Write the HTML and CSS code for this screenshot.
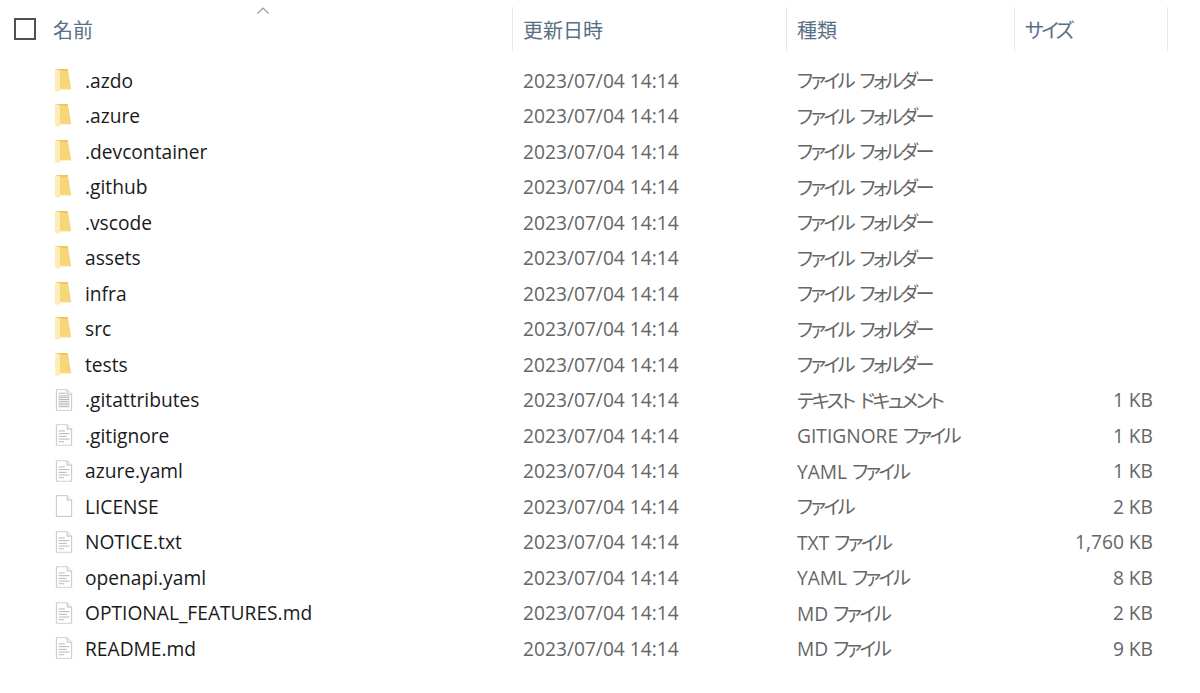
FILE: index.html
```html
<!DOCTYPE html>
<html lang="ja">
<head>
    <meta charset="UTF-8">
    <title>ファイル一覧</title>
    <link rel="stylesheet" href="styles.css">
</head>
<body>
    <svg class="defs" width="0" height="0">
        <defs>
            <linearGradient id="folderFill" x1="0" y1="0" x2="1" y2="0">
                <stop offset="0" stop-color="#fde9a9"/>
                <stop offset="1" stop-color="#f8dc8a"/>
            </linearGradient>
            <symbol id="folder" viewBox="0 0 16 23">
                <path d="M0 0h13v2l3 18H6V2z" fill="#f2c65c"/>
                <path d="M0 .5 5 2v16.500h9.500L16 20.500H5.500L3 23 .3 21.500z" fill="url(#folderFill)"/>
                <path d="M5 2h8l2.300 17.500H5z" fill="#f6d677"/>
                <path d="M0 .5v21l3 1.500 .5-3L5 19V2z" fill="#fdeeb9"/>
            </symbol>
            <symbol id="doc-blank" viewBox="0 0 20 24">
                <path d="M1.500 .5h12l5 5v18h-17z" fill="#fff" stroke="#bdbdbd"/>
                <path d="M13.500 .5v5h5" fill="#f2f2f2" stroke="#bdbdbd"/>
            </symbol>
            <symbol id="doc-text" viewBox="0 0 20 24">
                <use href="#doc-blank"/>
                <path d="M4 7.500h7M4 10.500h12M4 13.500h9M4 16.500h12M4 19.500h6" stroke="#b0b0b0" fill="none"/>
            </symbol>
            <symbol id="doc-lines" viewBox="0 0 20 24">
                <use href="#doc-blank"/>
                <path d="M4 4.500h8M4 7.500h12M4 9.500h12M4 11.500h12M4 13.500h12M4 15.500h12M4 17.500h12M4 19.500h12" stroke="#b0b0b0" fill="none"/>
            </symbol>
        </defs>
    </svg>

    <div class="list">
        <div class="header">
            <div class="col-name head-cell">
                <span class="checkbox"></span>
                <span>名前</span>
                <svg class="sort-arrow" width="12" height="7" viewBox="0 0 12 7"><path d="M.5 6.500l5.500-5.500 5.500 5.500" fill="none" stroke="#9a9a9a" stroke-width="1.200"/></svg>
            </div>
            <div class="col-date head-cell">更新日時</div>
            <div class="col-type head-cell">種類</div>
            <div class="col-size head-cell"><span class="kana">サイズ</span></div>
        </div>

        <div class="row"><div class="col-name"><svg class="icon folder"><use href="#folder"/></svg>.azdo</div><div class="col-date">2023/07/04 14:14</div><div class="col-type"><span class="kana">ファイル フォルダー</span></div><div class="col-size"></div></div>
        <div class="row"><div class="col-name"><svg class="icon folder"><use href="#folder"/></svg>.azure</div><div class="col-date">2023/07/04 14:14</div><div class="col-type"><span class="kana">ファイル フォルダー</span></div><div class="col-size"></div></div>
        <div class="row"><div class="col-name"><svg class="icon folder"><use href="#folder"/></svg>.devcontainer</div><div class="col-date">2023/07/04 14:14</div><div class="col-type"><span class="kana">ファイル フォルダー</span></div><div class="col-size"></div></div>
        <div class="row"><div class="col-name"><svg class="icon folder"><use href="#folder"/></svg>.github</div><div class="col-date">2023/07/04 14:14</div><div class="col-type"><span class="kana">ファイル フォルダー</span></div><div class="col-size"></div></div>
        <div class="row"><div class="col-name"><svg class="icon folder"><use href="#folder"/></svg>.vscode</div><div class="col-date">2023/07/04 14:14</div><div class="col-type"><span class="kana">ファイル フォルダー</span></div><div class="col-size"></div></div>
        <div class="row"><div class="col-name"><svg class="icon folder"><use href="#folder"/></svg>assets</div><div class="col-date">2023/07/04 14:14</div><div class="col-type"><span class="kana">ファイル フォルダー</span></div><div class="col-size"></div></div>
        <div class="row"><div class="col-name"><svg class="icon folder"><use href="#folder"/></svg>infra</div><div class="col-date">2023/07/04 14:14</div><div class="col-type"><span class="kana">ファイル フォルダー</span></div><div class="col-size"></div></div>
        <div class="row"><div class="col-name"><svg class="icon folder"><use href="#folder"/></svg>src</div><div class="col-date">2023/07/04 14:14</div><div class="col-type"><span class="kana">ファイル フォルダー</span></div><div class="col-size"></div></div>
        <div class="row"><div class="col-name"><svg class="icon folder"><use href="#folder"/></svg>tests</div><div class="col-date">2023/07/04 14:14</div><div class="col-type"><span class="kana">ファイル フォルダー</span></div><div class="col-size"></div></div>
        <div class="row"><div class="col-name"><svg class="icon"><use href="#doc-lines"/></svg>.gitattributes</div><div class="col-date">2023/07/04 14:14</div><div class="col-type"><span class="kana">テキスト ドキュメント</span></div><div class="col-size">1 KB</div></div>
        <div class="row"><div class="col-name"><svg class="icon"><use href="#doc-text"/></svg>.gitignore</div><div class="col-date">2023/07/04 14:14</div><div class="col-type">GITIGNORE <span class="kana">ファイル</span></div><div class="col-size">1 KB</div></div>
        <div class="row"><div class="col-name"><svg class="icon"><use href="#doc-text"/></svg>azure.yaml</div><div class="col-date">2023/07/04 14:14</div><div class="col-type">YAML <span class="kana">ファイル</span></div><div class="col-size">1 KB</div></div>
        <div class="row"><div class="col-name"><svg class="icon"><use href="#doc-blank"/></svg>LICENSE</div><div class="col-date">2023/07/04 14:14</div><div class="col-type"><span class="kana">ファイル</span></div><div class="col-size">2 KB</div></div>
        <div class="row"><div class="col-name"><svg class="icon"><use href="#doc-text"/></svg>NOTICE.txt</div><div class="col-date">2023/07/04 14:14</div><div class="col-type">TXT <span class="kana">ファイル</span></div><div class="col-size">1,760 KB</div></div>
        <div class="row"><div class="col-name"><svg class="icon"><use href="#doc-text"/></svg>openapi.yaml</div><div class="col-date">2023/07/04 14:14</div><div class="col-type">YAML <span class="kana">ファイル</span></div><div class="col-size">8 KB</div></div>
        <div class="row"><div class="col-name"><svg class="icon"><use href="#doc-text"/></svg>OPTIONAL_FEATURES.md</div><div class="col-date">2023/07/04 14:14</div><div class="col-type">MD <span class="kana">ファイル</span></div><div class="col-size">2 KB</div></div>
        <div class="row"><div class="col-name"><svg class="icon"><use href="#doc-text"/></svg>README.md</div><div class="col-date">2023/07/04 14:14</div><div class="col-type">MD <span class="kana">ファイル</span></div><div class="col-size">9 KB</div></div>
    </div>
</body>
</html>
```

FILE: styles.css
```css
html, body {
    margin: 0;
    height: 100%;
    overflow: hidden;
    background: #ffffff;
}
body {
    font-family: "Open Sans", "Noto Sans CJK JP", sans-serif;
    font-size: 19.2px;
    color: #666666;
}
.defs {
    position: absolute;
}
.list {
    width: 1168px;
}
.header {
    display: flex;
    height: 44px;
    margin-top: 7px;
    margin-bottom: 11.5px;
    font-size: 20px;
    color: #5a6f86;
}
.head-cell {
    border-right: 1px solid #e7e7e7;
    box-sizing: border-box;
}
.row {
    display: flex;
    height: 35.5px;
    align-items: center;
}
.kana {
    font-feature-settings: "palt";
    letter-spacing: -2.6px;
    word-spacing: 4px;
    white-space: pre;
}
.col-name {
    position: relative;
    width: 513px;
    display: flex;
    align-items: center;
    padding-left: 55px;
    box-sizing: border-box;
    color: #1a1a1a;
}
.col-date {
    width: 274px;
    padding-left: 10px;
    box-sizing: border-box;
    display: flex;
    align-items: center;
}
.col-type {
    width: 228px;
    padding-left: 10px;
    box-sizing: border-box;
    white-space: pre;
}
.col-size {
    width: 153px;
    padding: 0 15px 0 10px;
    box-sizing: border-box;
    display: flex;
    align-items: center;
}
.row .col-size {
    justify-content: flex-end;
}
.header .col-name {
    color: #5a6f86;
    padding-left: 14px;
    gap: 17px;
}
.header .col-date,
.header .col-type {
    display: flex;
    align-items: center;
}
.checkbox {
    width: 22px;
    height: 22px;
    border: 2px solid #505050;
    box-sizing: border-box;
}
.sort-arrow {
    position: absolute;
    left: 257px;
    top: 0;
}
.icon {
    width: 18px;
    height: 24px;
    margin-right: 12px;
    flex: none;
}
.folder {
    width: 16px;
    height: 23px;
    margin-right: 14px;
}
```
